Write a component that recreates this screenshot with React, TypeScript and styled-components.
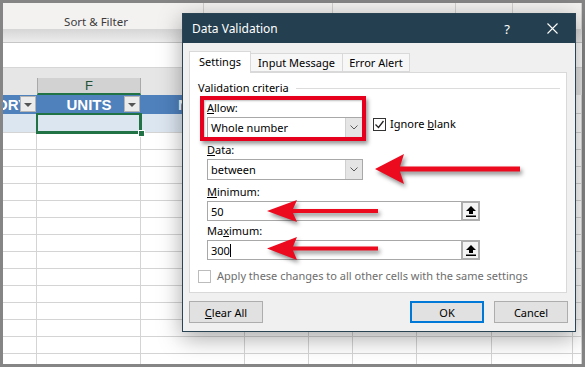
import React from 'react';
import styled, { createGlobalStyle } from 'styled-components';

const GlobalStyle = createGlobalStyle`
    html,
    body {
        margin: 0;
        padding: 0;
        background: #858585;
    }
    body {
        width: 585px;
        height: 367px;
        overflow: hidden;
        font-family: 'Noto Sans', sans-serif;
    }
`;

const SHEET_COLUMNS = '34px 104px 104px 64px 44px 64px 75px 81px 9px';
const COLUMN_COUNT = 9;
const BODY_ROWS = 14;

type HeaderCellData = { text: string; align: 'flex-start' | 'center' | 'flex-end'; filter: boolean };

const HEADER_CELLS: HeaderCellData[] = [
    { text: 'CATEGORY', align: 'flex-end', filter: true },
    { text: 'UNITS', align: 'center', filter: true },
    { text: 'NET', align: 'center', filter: true },
    { text: '', align: 'center', filter: false },
    { text: '', align: 'center', filter: false },
    { text: '', align: 'center', filter: false },
    { text: '', align: 'center', filter: false },
    { text: '', align: 'center', filter: false },
];

const ChevronDown = () => (
    <svg width="8" height="5" viewBox="0 0 8 5">
        <polyline points="0.5,0.5 4,4 7.5,0.5" fill="none" stroke="#5a5a5a" strokeWidth="1" />
    </svg>
);

const UploadGlyph = () => (
    <svg width="10" height="11" viewBox="0 0 10 11">
        <path d="M5 0 L10 5 L7 5 L7 8 L3 8 L3 5 L0 5 Z" fill="#000" />
        <rect x="0" y="9.5" width="10" height="1.5" fill="#000" />
    </svg>
);

const CheckMark = () => (
    <svg width="11" height="11" viewBox="0 0 11 11">
        <polyline points="1.5,5.5 4.5,8.5 9.5,2" fill="none" stroke="#222" strokeWidth="1.3" />
    </svg>
);

const CloseGlyph = () => (
    <svg width="11" height="11" viewBox="0 0 11 11">
        <path d="M0.5 0.5 L10.5 10.5 M10.5 0.5 L0.5 10.5" stroke="#fff" strokeWidth="1.1" />
    </svg>
);

type ArrowProps = { x: number; y: number; length: number; head: number; spread: number; thickness: number };

const AnnotationArrow: React.FC<ArrowProps> = ({ x, y, length, head, spread, thickness }) => {
    const mid = spread / 2;
    const half = thickness / 2;
    const d = `M0 ${mid} L${head} 0 L${head - 4} ${mid - half} L${length} ${mid - half} L${length} ${
        mid + half
    } L${head - 4} ${mid + half} L${head} ${spread} Z`;
    return (
        <ArrowSvg $x={x} $y={y} width={length} height={spread} viewBox={`0 0 ${length} ${spread}`}>
            <path d={d} fill="#ec0a1e" />
        </ArrowSvg>
    );
};

const App: React.FC = () => {
    return (
        <Frame>
            <GlobalStyle />
            <Sheet>
                <Ribbon>
                    <RibbonGroup $width={201} $shift={14}>
                        Sort &amp; Filter
                    </RibbonGroup>
                    <RibbonGroup $width={129} />
                    <RibbonGroup $width={123} />
                    <RibbonGroup $width={57} />
                    <RibbonGroup $width={69} />
                </Ribbon>
                <RibbonShadow />
                <FormulaBar />
                <SheetGap />
                <ColumnHeaderRow>
                    {Array.from({ length: COLUMN_COUNT }).map((_, i) => (
                        <ColumnHeaderCell key={i} $selected={i === 1}>
                            {i === 1 ? 'F' : ''}
                        </ColumnHeaderCell>
                    ))}
                </ColumnHeaderRow>
                <TableHeaderRow>
                    {HEADER_CELLS.map((cell, i) => (
                        <TableHeaderCell key={i} $align={cell.align} $pad={i === 0 ? 9 : 0}>
                            <HeaderText>{cell.text}</HeaderText>
                            {cell.filter && (
                                <FilterButton>
                                    <FilterTriangle />
                                </FilterButton>
                            )}
                        </TableHeaderCell>
                    ))}
                    <DataCell $band={false} />
                </TableHeaderRow>
                <DataRow $height={19}>
                    {Array.from({ length: COLUMN_COUNT }).map((_, i) => (
                        <DataCell key={i} $band={i < COLUMN_COUNT - 1} $selected={i === 1} />
                    ))}
                </DataRow>
                {Array.from({ length: BODY_ROWS }).map((_, r) => (
                    <DataRow key={r} $height={17}>
                        {Array.from({ length: COLUMN_COUNT }).map((_, i) => (
                            <DataCell key={i} $band={false} />
                        ))}
                    </DataRow>
                ))}
            </Sheet>

            <Dialog>
                <TitleBar>
                    <Title>Data Validation</Title>
                    <HelpButton>?</HelpButton>
                    <CloseButton>
                        <CloseGlyph />
                    </CloseButton>
                </TitleBar>
                <DialogBody>
                    <TabList>
                        <Tab $active $width={62}>
                            Settings
                        </Tab>
                        <Tab $width={93}>Input Message</Tab>
                        <Tab $width={68}>Error Alert</Tab>
                    </TabList>
                    <Panel>
                        <GroupHeader>
                            <span>Validation criteria</span>
                            <GroupLine />
                        </GroupHeader>
                        <Criteria>
                            <FieldLabel $top={6}>
                                <u>A</u>llow:
                            </FieldLabel>
                            <ControlRow>
                                <Select $width={156}>
                                    <SelectValue>Whole number</SelectValue>
                                    <DropButton>
                                        <ChevronDown />
                                    </DropButton>
                                </Select>
                                <CheckLabel>
                                    <CheckBox $checked>
                                        <CheckMark />
                                    </CheckBox>
                                    <span>
                                        Ignore <u>b</u>lank
                                    </span>
                                </CheckLabel>
                            </ControlRow>
                            <FieldLabel $top={5}>
                                <u>D</u>ata:
                            </FieldLabel>
                            <ControlRow>
                                <Select $width={156}>
                                    <SelectValue>between</SelectValue>
                                    <DropButton>
                                        <ChevronDown />
                                    </DropButton>
                                </Select>
                            </ControlRow>
                            <FieldLabel $top={5}>
                                <u>M</u>inimum:
                            </FieldLabel>
                            <ControlRow>
                                <TextInput>
                                    <InputValue>50</InputValue>
                                    <RangeButton>
                                        <UploadGlyph />
                                    </RangeButton>
                                </TextInput>
                            </ControlRow>
                            <FieldLabel $top={3}>
                                Ma<u>x</u>imum:
                            </FieldLabel>
                            <ControlRow>
                                <TextInput>
                                    <InputValue>
                                        300
                                        <Caret />
                                    </InputValue>
                                    <RangeButton>
                                        <UploadGlyph />
                                    </RangeButton>
                                </TextInput>
                            </ControlRow>
                        </Criteria>
                        <ApplyRow>
                            <CheckBox $disabled />
                            <span>Apply these changes to all other cells with the same settings</span>
                        </ApplyRow>
                    </Panel>
                    <ButtonRow>
                        <DialogButton>
                            <u>C</u>lear All
                        </DialogButton>
                        <ButtonGroup>
                            <DialogButton $primary>OK</DialogButton>
                            <DialogButton>Cancel</DialogButton>
                        </ButtonGroup>
                    </ButtonRow>
                </DialogBody>
            </Dialog>

            <Highlight />
            <AnnotationArrow x={375} y={154} length={145} head={29} spread={30} thickness={5} />
            <AnnotationArrow x={267} y={200} length={111} head={30} spread={22} thickness={4} />
            <AnnotationArrow x={267} y={237} length={111} head={30} spread={23} thickness={4} />
        </Frame>
    );
};

const Frame = styled.div`
    position: relative;
    width: 585px;
    height: 367px;
    box-sizing: border-box;
    padding: 3px;
    background: #858585;
    overflow: hidden;
`;

const Sheet = styled.div`
    display: flex;
    flex-direction: column;
    height: 100%;
    background: #fff;
    overflow: hidden;
`;

const Ribbon = styled.div`
    display: flex;
    flex: 0 0 26px;
    background: #f3f2f1;
`;

const RibbonGroup = styled.div<{ $width: number; $shift?: number }>`
    flex: 0 0 ${(p) => p.$width}px;
    box-sizing: border-box;
    display: flex;
    align-items: flex-end;
    justify-content: center;
    padding: 0 ${(p) => p.$shift ?? 0}px 1px 0;
    border-right: 1px solid #d2d0ce;
    font-size: 11.5px;
    line-height: 13px;
    color: #3b3b3b;
`;

const RibbonShadow = styled.div`
    flex: 0 0 13px;
    background: linear-gradient(#d6d6d6, #ececec);
`;

const FormulaBar = styled.div`
    flex: 0 0 26px;
    box-sizing: border-box;
    background: #fff;
    border-top: 1px solid #c6c6c6;
    border-bottom: 1px solid #d6d6d6;
`;

const SheetGap = styled.div`
    flex: 0 0 10px;
    background: #e6e6e6;
`;

const ColumnHeaderRow = styled.div`
    display: grid;
    grid-template-columns: ${SHEET_COLUMNS};
    flex: 0 0 16px;
    background: #e6e6e6;
`;

const ColumnHeaderCell = styled.div<{ $selected: boolean }>`
    box-sizing: border-box;
    display: flex;
    align-items: center;
    justify-content: center;
    font-family: 'Liberation Sans', sans-serif;
    font-size: 13px;
    color: #1f5136;
    background: ${(p) => (p.$selected ? '#d2d2d2' : 'transparent')};
    border-left: ${(p) => (p.$selected ? '1px solid #a9a9a9' : 'none')};
    border-right: ${(p) => (p.$selected ? '1px solid #a9a9a9' : 'none')};
    border-bottom: ${(p) => (p.$selected ? '2px solid #217346' : 'none')};
`;

const TableHeaderRow = styled.div`
    display: grid;
    grid-template-columns: ${SHEET_COLUMNS};
    flex: 0 0 19px;
`;

const TableHeaderCell = styled.div<{ $align: string; $pad: number }>`
    position: relative;
    display: flex;
    align-items: center;
    justify-content: ${(p) => p.$align};
    padding-right: ${(p) => p.$pad}px;
    background: #4f81bd;
    overflow: hidden;
    color: #fff;
    font-family: 'Liberation Sans', sans-serif;
    font-weight: bold;
    font-size: 15px;
`;

const HeaderText = styled.span`
    flex-shrink: 0;
    white-space: nowrap;
`;

const FilterButton = styled.div`
    position: absolute;
    top: 1px;
    right: 1px;
    width: 16px;
    height: 16px;
    box-sizing: border-box;
    display: flex;
    align-items: center;
    justify-content: center;
    background: #ececec;
    border: 1px solid #b4b4b4;
`;

const FilterTriangle = styled.div`
    width: 0;
    height: 0;
    border-left: 4px solid transparent;
    border-right: 4px solid transparent;
    border-top: 4px solid #555;
    margin-top: 1px;
`;

const DataRow = styled.div<{ $height: number }>`
    display: grid;
    grid-template-columns: ${SHEET_COLUMNS};
    flex: 0 0 ${(p) => p.$height}px;
`;

const DataCell = styled.div<{ $band: boolean; $selected?: boolean }>`
    position: relative;
    box-sizing: border-box;
    border-right: 1px solid #d4d4d4;
    border-bottom: 1px solid #d4d4d4;
    background: ${(p) => (p.$band ? '#dce6f1' : '#fff')};
    ${(p) =>
        p.$selected &&
        `
        z-index: 1;
        border-color: #217346;
        box-shadow: 0 0 0 1px #217346, inset 0 0 0 1px #217346;
        &::after {
            content: '';
            position: absolute;
            right: -4px;
            bottom: -4px;
            width: 5px;
            height: 5px;
            background: #217346;
            box-shadow: 0 0 0 1px #fff;
        }
    `}
`;

const Dialog = styled.div`
    position: absolute;
    left: 182px;
    top: 13px;
    width: 394px;
    height: 319px;
    box-sizing: border-box;
    display: flex;
    flex-direction: column;
    border: 1px solid #2a4454;
    background: #f0f0f0;
    box-shadow: 0 6px 22px rgba(0, 0, 0, 0.35);
    font-family: 'Noto Sans', sans-serif;
    font-size: 11px;
    color: #000;
`;

const TitleBar = styled.div`
    display: flex;
    align-items: center;
    flex: 0 0 29px;
    padding: 0 17px 0 9px;
    background: #243f4f;
    color: #fff;
`;

const Title = styled.div`
    flex: 1;
    font-size: 12px;
`;

const HelpButton = styled.div`
    font-size: 13px;
    margin-right: 37px;
`;

const CloseButton = styled.div`
    display: flex;
    align-items: center;
`;

const DialogBody = styled.div`
    display: flex;
    flex-direction: column;
    flex: 1;
    padding: 8px 8px 8px 6px;
`;

const TabList = styled.div`
    display: flex;
    align-items: flex-end;
    height: 21px;
    position: relative;
    z-index: 1;
`;

const Tab = styled.div<{ $active?: boolean; $width: number }>`
    box-sizing: border-box;
    width: ${(p) => p.$width}px;
    height: ${(p) => (p.$active ? 22 : 19)}px;
    margin-bottom: ${(p) => (p.$active ? -1 : 0)}px;
    margin-right: -1px;
    display: flex;
    align-items: center;
    justify-content: center;
    padding-bottom: ${(p) => (p.$active ? 2 : 0)}px;
    background: ${(p) => (p.$active ? '#fff' : '#f7f7f7')};
    border: 1px solid #d9d9d9;
    border-bottom: ${(p) => (p.$active ? 'none' : '1px solid #d9d9d9')};
`;

const Panel = styled.div`
    box-sizing: border-box;
    height: 221px;
    padding: 8px 8px 0 8px;
    background: #fff;
    border: 1px solid #d9d9d9;
`;

const GroupHeader = styled.div`
    display: flex;
    align-items: center;
    gap: 7px;
    line-height: 14px;
`;

const GroupLine = styled.div`
    flex: 1;
    height: 1px;
    margin-right: -2px;
    background: #dcdcdc;
`;

const Criteria = styled.div`
    display: flex;
    flex-direction: column;
    padding-left: 9px;
`;

const FieldLabel = styled.div<{ $top: number }>`
    margin-top: ${(p) => p.$top}px;
    margin-bottom: 2px;
    line-height: 14px;
`;

const ControlRow = styled.div`
    display: flex;
    align-items: flex-start;
`;

const Select = styled.div<{ $width: number }>`
    box-sizing: border-box;
    width: ${(p) => p.$width}px;
    height: 21px;
    display: flex;
    border: 1px solid #a8a8a8;
    background: #fff;
`;

const SelectValue = styled.div`
    flex: 1;
    display: flex;
    align-items: center;
    padding-left: 3px;
`;

const DropButton = styled.div`
    width: 16px;
    display: flex;
    align-items: center;
    justify-content: center;
    background: #e5e5e5;
    border-left: 1px solid #d0d0d0;
`;

const CheckLabel = styled.div`
    display: flex;
    align-items: center;
    gap: 4px;
    margin-left: 10px;
    margin-top: 0;
    line-height: 14px;
`;

const CheckBox = styled.div<{ $checked?: boolean; $disabled?: boolean }>`
    box-sizing: border-box;
    width: 13px;
    height: 13px;
    display: flex;
    align-items: center;
    justify-content: center;
    background: #fff;
    border: 1px solid ${(p) => (p.$disabled ? '#bcbcbc' : '#333')};
`;

const TextInput = styled.div`
    box-sizing: border-box;
    width: 273px;
    height: 20px;
    display: flex;
    border: 1px solid #a8a8a8;
    background: #fff;
`;

const InputValue = styled.div`
    flex: 1;
    display: flex;
    align-items: center;
    padding-left: 3px;
`;

const Caret = styled.span`
    display: inline-block;
    width: 1px;
    height: 13px;
    background: #000;
`;

const RangeButton = styled.div`
    box-sizing: border-box;
    width: 19px;
    display: flex;
    align-items: center;
    justify-content: center;
    margin: -1px -1px -1px 0;
    background: #f4f4f4;
    border: 2px solid #adadad;
`;

const ApplyRow = styled.div`
    display: flex;
    align-items: center;
    gap: 6px;
    margin-top: 9px;
    line-height: 14px;
    color: #6d6d6d;
`;

const ButtonRow = styled.div`
    display: flex;
    justify-content: space-between;
    margin-top: 8px;
    padding-right: 0;
`;

const ButtonGroup = styled.div`
    display: flex;
    gap: 10px;
    margin-right: -1px;
`;

const DialogButton = styled.div<{ $primary?: boolean }>`
    box-sizing: border-box;
    width: 74px;
    height: 22px;
    display: flex;
    align-items: center;
    justify-content: center;
    background: #e1e1e1;
    border: ${(p) => (p.$primary ? '2px solid #0078d7' : '1px solid #adadad')};
`;

const Highlight = styled.div`
    position: absolute;
    left: 200px;
    top: 96px;
    width: 166px;
    height: 45px;
    box-sizing: border-box;
    border: 4px solid #e6001e;
    box-shadow: 2px 3px 4px rgba(0, 0, 0, 0.4), inset 1px 1px 2px rgba(0, 0, 0, 0.25);
`;

const ArrowSvg = styled.svg<{ $x: number; $y: number }>`
    position: absolute;
    left: ${(p) => p.$x}px;
    top: ${(p) => p.$y}px;
    overflow: visible;
    filter: drop-shadow(2px 3px 2px rgba(0, 0, 0, 0.45));
`;

export default App;
